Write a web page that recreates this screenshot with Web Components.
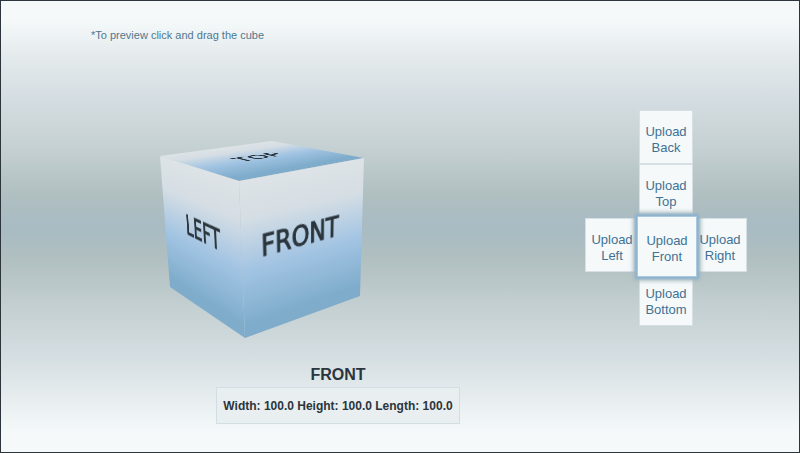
<!DOCTYPE html>
<html lang="en">
<head>
<meta charset="utf-8">
<title>Cube preview</title>
<style>
  body { margin: 0; font-family: "Liberation Sans", Arial, sans-serif; color: #2b353c; }
</style>
</head>
<body>
<cube-designer></cube-designer>
<script>
// A square face mapped onto four corner points, clockwise from its top left.
class CubeFace extends HTMLElement {
  constructor() {
    super();
    this.attachShadow({ mode: 'open' }).innerHTML = `
      <style>
        :host {
          position: absolute; left: 0; top: 0; width: 150px; height: 150px;
          display: grid; place-items: center; box-sizing: border-box;
          transform-origin: 0 0;
          font: 28px/32px "DejaVu Sans", sans-serif; -webkit-text-stroke: 1px;
          background: linear-gradient(#dde3e6, #d6dee4 22%, #a2c4e3 56%, #9cc0df 62%, #7faccb 92%);
        }
      </style>
      <slot></slot>`;
  }
  connectedCallback() {
    const [x0, y0, x1, y1, x2, y2, x3, y3] = this.getAttribute('corners').split(/[ ,]+/).map(Number);
    const size = 150;
    const dx1 = x1 - x2, dx2 = x3 - x2, sx = x0 - x1 + x2 - x3;
    const dy1 = y1 - y2, dy2 = y3 - y2, sy = y0 - y1 + y2 - y3;
    const det = dx1 * dy2 - dx2 * dy1;
    const g = (sx * dy2 - dx2 * sy) / det;
    const h = (dx1 * sy - sx * dy1) / det;
    const m = [
      (x1 - x0 + g * x1) / size, (y1 - y0 + g * y1) / size, 0, g / size,
      (x3 - x0 + h * x3) / size, (y3 - y0 + h * y3) / size, 0, h / size,
      0, 0, 1, 0,
      x0, y0, 0, 1
    ];
    this.style.transform = `matrix3d(${m.map(v => v.toFixed(8)).join(',')})`;
  }
}
customElements.define('cube-face', CubeFace);

class CubePreview extends HTMLElement {
  constructor() {
    super();
    this.attachShadow({ mode: 'open' }).innerHTML = `
      <style>
        :host { display: block; position: relative; width: 204px; height: 198px; cursor: grab; }
        .left { padding: 0 0 20px 12px; }
        .front { padding: 0 12px 20px 0; }
      </style>
      <cube-face class="top" corners="0,15 112,0 204,17 79,40">TOP</cube-face>
      <cube-face class="left" corners="0,15 79,40 85,197 10,146">LEFT</cube-face>
      <cube-face class="front" corners="79,40 204,17 200,155 85,197">FRONT</cube-face>`;
  }
}
customElements.define('cube-preview', CubePreview);

class UploadTile extends HTMLElement {
  constructor() {
    super();
    this.attachShadow({ mode: 'open' }).innerHTML = `
      <style>
        :host { display: grid; }
        button {
          font: 13px/16px "Liberation Sans", Arial, sans-serif; color: #3f7194;
          background: #f5f9fa; border: 1px solid #d5dfe4;
          margin: 0; padding: 6px 0 0; cursor: pointer;
        }
        span { display: block; position: relative; z-index: 2; }
        :host([selected]) button {
          position: relative; z-index: 1; margin: -2px -4px -5px -2px; padding-top: 4px;
          border-color: #a9c9e0;
          box-shadow: 0 0 2px 2px #8db2cd, 0 0 4px 4px #abbcc0;
        }
      </style>
      <button type="button"><span>Upload</span><span><slot></slot></span></button>`;
  }
}
customElements.define('upload-tile', UploadTile);

class UploadNet extends HTMLElement {
  constructor() {
    super();
    this.attachShadow({ mode: 'open' }).innerHTML = `
      <style>
        :host {
          display: grid; grid-template-columns: repeat(3, 54px); grid-auto-rows: 54px;
          grid-template-areas: ". back ." ". top ." "left front right" ". bottom .";
        }
        .back { grid-area: back } .top { grid-area: top } .left { grid-area: left }
        .front { grid-area: front } .right { grid-area: right } .bottom { grid-area: bottom }
      </style>
      <upload-tile class="back">Back</upload-tile>
      <upload-tile class="top">Top</upload-tile>
      <upload-tile class="left">Left</upload-tile>
      <upload-tile class="front" selected>Front</upload-tile>
      <upload-tile class="right">Right</upload-tile>
      <upload-tile class="bottom">Bottom</upload-tile>`;
  }
}
customElements.define('upload-net', UploadNet);

class CubeDimensions extends HTMLElement {
  constructor() {
    super();
    this.attachShadow({ mode: 'open' }).innerHTML = `
      <style>
        :host { display: flex; flex-direction: column; align-items: center; gap: 2px; }
        h1 { margin: 0; font-size: 16px; line-height: 20px; }
        p {
          margin: 0; padding: 10px 6px 9px; font-size: 12px; line-height: 16px; font-weight: bold;
          background: #e9eef0; border: 1px solid #d3dde4;
        }
      </style>
      <h1>FRONT</h1>
      <p><slot></slot></p>`;
  }
}
customElements.define('cube-dimensions', CubeDimensions);

class CubeDesigner extends HTMLElement {
  constructor() {
    super();
    this.attachShadow({ mode: 'open' }).innerHTML = `
      <style>
        :host {
          display: grid; grid-template-columns: 1fr auto; align-items: start;
          box-sizing: border-box; min-height: 100vh; padding: 26px 52px 27px 90px;
          border: 1px solid #2c343c;
          background: linear-gradient(#f5f9fa 4%, #e5ebed 12%, #d5dee2 21%, #c6d1d3 32%,
            #b0bfc0 43%, #a9bcc3 49%, #a9bcc3 51%, #b0bfc0 57%, #c6d1d3 69%,
            #d5dee2 79%, #e5ebed 87%, #f5f9fa 96%);
        }
        .hint { margin: 0; font-size: 11px; line-height: 16px; color: #51788f; }
        main { display: grid; }
        cube-preview { margin: 98px 0 26px 14%; }
        upload-net { margin-top: 83px; }
      </style>
      <main>
        <p class="hint">*To preview click and drag the cube</p>
        <cube-preview></cube-preview>
        <cube-dimensions>Width: 100.0 Height: 100.0 Length: 100.0</cube-dimensions>
      </main>
      <upload-net></upload-net>`;
  }
}
customElements.define('cube-designer', CubeDesigner);
</script>
</body>
</html>
